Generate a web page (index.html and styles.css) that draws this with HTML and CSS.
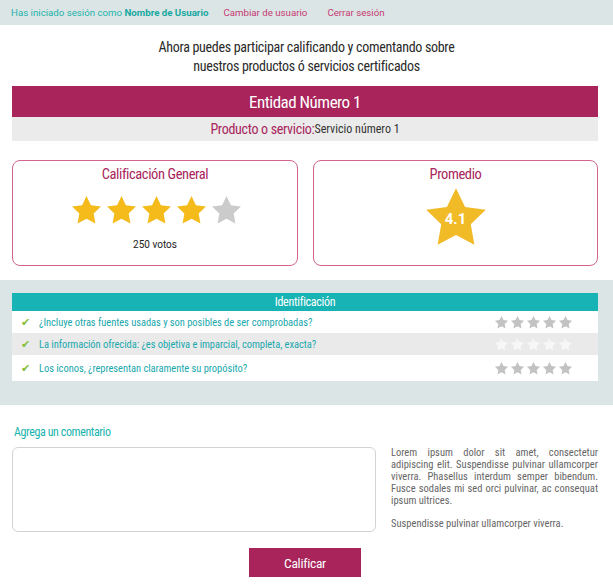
FILE: index.html
```html
<!DOCTYPE html>
<html lang="es">
<head>
<meta charset="utf-8">
<title>Calificar</title>
<link rel="stylesheet" href="styles.css">
</head>
<body>
<svg width="0" height="0" class="defs">
  <defs>
    <path id="star" d="M12 1.5l3.2 6.6 7.3 1-5.3 5.1 1.3 7.2L12 18l-6.5 3.4 1.3-7.2L1.5 9.1l7.3-1z"/>
  </defs>
</svg>
<div class="topbar">
  <span class="who">Has iniciado sesión como <b>Nombre de Usuario</b></span>
  <a class="link">Cambiar de usuario</a>
  <a class="link">Cerrar sesión</a>
</div>

<p class="intro">Ahora puedes participar calificando y comentando sobre<br>nuestros productos ó servicios certificados</p>

<div class="wrap">
  <div class="entity">Entidad Número 1</div>
  <div class="product"><span class="plabel">Producto o servicio:</span><span class="pval">Servicio número 1</span></div>

  <div class="cards">
    <div class="card">
      <div class="card-title">Calificación General</div>
      <div class="stars">
        <svg class="st on" viewBox="0 0 24 24"><use href="#star"/></svg>
        <svg class="st on" viewBox="0 0 24 24"><use href="#star"/></svg>
        <svg class="st on" viewBox="0 0 24 24"><use href="#star"/></svg>
        <svg class="st on" viewBox="0 0 24 24"><use href="#star"/></svg>
        <svg class="st off" viewBox="0 0 24 24"><use href="#star"/></svg>
      </div>
      <div class="votes">250 votos</div>
    </div>
    <div class="card">
      <div class="card-title">Promedio</div>
      <div class="big">
        <svg class="bigstar" viewBox="0 0 24 24"><use href="#star"/></svg>
        <span class="score">4.1</span>
      </div>
    </div>
  </div>
</div>

<div class="band">
  <div class="table">
    <div class="thead">Identificación</div>
    <div class="row">
      <span class="check">&#10004;</span>
      <span class="q">¿Incluye otras fuentes usadas y son posibles de ser comprobadas?</span>
      <span class="rs"><svg viewBox="0 0 24 24"><use href="#star"/></svg><svg viewBox="0 0 24 24"><use href="#star"/></svg><svg viewBox="0 0 24 24"><use href="#star"/></svg><svg viewBox="0 0 24 24"><use href="#star"/></svg><svg viewBox="0 0 24 24"><use href="#star"/></svg></span>
    </div>
    <div class="row alt">
      <span class="check">&#10004;</span>
      <span class="q">La información ofrecida: ¿es objetiva e imparcial, completa, exacta?</span>
      <span class="rs"><svg viewBox="0 0 24 24"><use href="#star"/></svg><svg viewBox="0 0 24 24"><use href="#star"/></svg><svg viewBox="0 0 24 24"><use href="#star"/></svg><svg viewBox="0 0 24 24"><use href="#star"/></svg><svg viewBox="0 0 24 24"><use href="#star"/></svg></span>
    </div>
    <div class="row last">
      <span class="check">&#10004;</span>
      <span class="q">Los iconos, ¿representan claramente su propósito?</span>
      <span class="rs"><svg viewBox="0 0 24 24"><use href="#star"/></svg><svg viewBox="0 0 24 24"><use href="#star"/></svg><svg viewBox="0 0 24 24"><use href="#star"/></svg><svg viewBox="0 0 24 24"><use href="#star"/></svg><svg viewBox="0 0 24 24"><use href="#star"/></svg></span>
    </div>
  </div>
</div>

<div class="comment">
  <div class="c-title">Agrega un comentario</div>
  <div class="c-body">
    <textarea class="ta"></textarea>
    <div class="lorem">
      <p><span class="ln">Lorem ipsum dolor sit amet, consectetur</span><span class="ln">adipiscing elit. Suspendisse pulvinar ullamcorper</span><span class="ln">viverra. Phasellus interdum semper bibendum.</span><span class="ln">Fusce sodales mi sed orci pulvinar, ac consequat</span><span class="ln end">ipsum ultrices.</span></p>
      <p>Suspendisse pulvinar ullamcorper viverra.</p>
    </div>
  </div>
  <div class="btn-row"><button class="btn">Calificar</button></div>
</div>
</body>
</html>
```

FILE: styles.css
```css
* { box-sizing: border-box; }
html, body { margin: 0; padding: 0; }
body {
  background: #ffffff;
  font-family: Roboto, "Liberation Sans", sans-serif;
  width: 613px;
  overflow: hidden;
}
.defs { position: absolute; }
.topbar {
  height: 25px;
  background: #dce5e5;
  display: flex;
  align-items: center;
  padding-left: 11px;
  font-size: 9.7px;
}
.who { color: #22b3ab; margin-right: 15px; }
.who b { font-weight: 700; color: #17a8a0; }
.link { color: #c43a72; margin-right: 20px; }

.intro {
  margin: 13px 0 0;
  text-align: center;
  font-family: "Roboto Condensed", sans-serif;
  font-size: 14px;
  letter-spacing: -0.3px;
  line-height: 19px;
  color: #2a2a2a;
}
.wrap { padding: 10px 15px 0 12px; }
.entity {
  background: #a8245b;
  color: #fff;
  height: 31px;
  display: flex;
  align-items: center;
  justify-content: center;
  font-family: "Roboto Condensed", sans-serif;
  font-size: 17px;
  letter-spacing: -0.5px;
}
.product {
  background: #ebebeb;
  height: 24px;
  display: flex;
  align-items: center;
  justify-content: center;
  font-family: "Roboto Condensed", sans-serif;
}
.plabel { color: #a8245b; font-size: 14px; letter-spacing: -0.3px; }
.pval { color: #333; font-size: 12px; }

.cards {
  display: grid;
  grid-template-columns: 286px 285px;
  justify-content: space-between;
  margin-top: 19px;
}
.card {
  border: 1px solid #d2648f;
  border-radius: 8px;
  height: 106px;
  display: flex;
  flex-direction: column;
  align-items: center;
}
.card-title {
  margin-top: 5px;
  font-family: "Roboto Condensed", sans-serif;
  font-size: 14.5px;
  letter-spacing: -0.4px;
  color: #a8245b;
}
.stars { display: flex; gap: 2px; margin-top: 11px; margin-left: 2px; }
.st { width: 33px; height: 33px; }
.st.on { fill: #f4bb1b; }
.st.off { fill: #cbcbcb; }
.votes { font-size: 10px; color: #222; margin-top: 12px; }
.big {
  position: relative;
  width: 70px;
  height: 68px;
  margin-top: 1px;
}
.bigstar { width: 70px; height: 68px; fill: #f1ba27; display: block; }
.score {
  position: absolute;
  left: 0; right: 0; top: 26px;
  text-align: center;
  color: #fff;
  font-weight: 700;
  font-size: 15px;
}

.band {
  background: #dce5e5;
  margin-top: 14px;
  padding: 13px 15px 24px 12px;
}
.table { background: #fff; }
.thead {
  background: #18b3b5;
  color: #fff;
  height: 18px;
  display: flex;
  align-items: center;
  justify-content: center;
  font-family: "Roboto Condensed", sans-serif;
  font-size: 12px;
  letter-spacing: -0.3px;
}
.row {
  display: flex;
  align-items: center;
  height: 22px;
  padding-left: 9px;
}
.row.alt { background: #eaeaea; }
.row.last { height: 26px; }
.check { color: #86be3a; font-size: 11px; width: 18px; }
.q {
  flex: 1;
  color: #1aa8ad;
  font-family: "Roboto Condensed", sans-serif;
  font-size: 10.5px;
  letter-spacing: -0.05px;
}
.rs { display: flex; gap: 1px; margin-right: 25px; }
.rs svg { width: 15px; height: 15px; fill: #c3c3c3; }
.row.alt .rs svg { fill: #f7f7f7; }

.comment { padding: 20px 15px 10px 12px; }
.c-title {
  color: #18b3ad;
  font-family: "Roboto Condensed", sans-serif;
  font-size: 12px;
  letter-spacing: -0.4px;
  margin-left: 2px;
}
.c-body { display: flex; gap: 15px; margin-top: 8px; }
.ta {
  width: 364px;
  height: 85px;
  border: 1px solid #d3d3d3;
  border-radius: 6px;
  resize: none;
  background: #fff;
  flex: none;
}
.lorem {
  flex: 1;
  font-family: "Roboto Condensed", sans-serif;
  font-size: 10.5px;
  line-height: 12px;
  color: #666;
  padding-top: 0;
}
.lorem p { margin: 0 0 11px; }
.lorem p:last-child { margin-bottom: 0; }
.ln {
  display: block;
  white-space: nowrap;
  text-align: justify;
  text-align-last: justify;
}
.ln.end { text-align-last: left; }
.btn-row { display: flex; justify-content: center; margin-top: 16px; }
.btn {
  width: 112px;
  height: 29px;
  border: none;
  background: #a8245b;
  color: #fff;
  font-family: "Roboto Condensed", sans-serif;
  font-size: 13.5px;
  letter-spacing: -0.3px;
}
```
